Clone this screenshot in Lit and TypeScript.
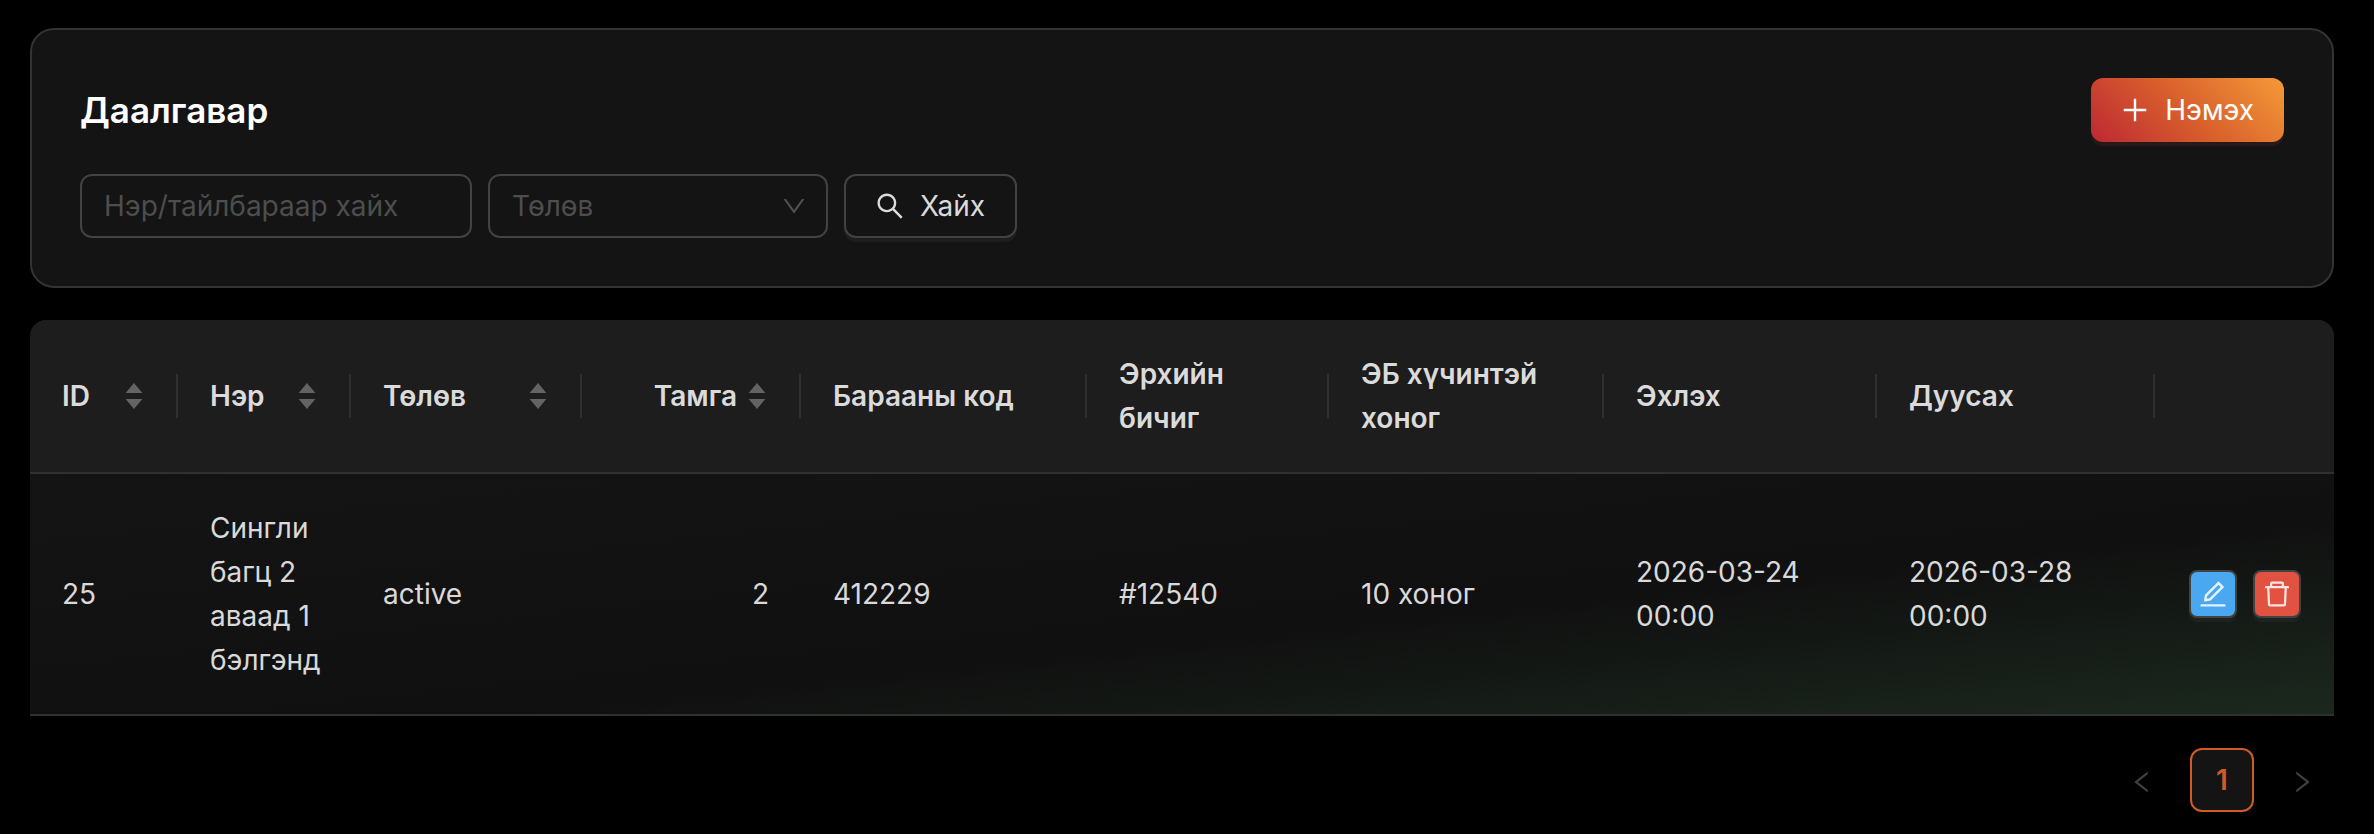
import { LitElement, html, css, svg } from "lit";
import { customElement, state } from "lit/decorators.js";

const ICONS: Record<string, string[]> = {
  plus: [
    "M482 152h60q8 0 8 8v704q0 8-8 8h-60q-8 0-8-8V160q0-8 8-8z",
    "M160 474h704q8 0 8 8v60q0 8-8 8H160q-8 0-8-8v-60q0-8 8-8z",
  ],
  search: [
    "M909.6 854.5L649.9 594.8C690.2 542.7 712 479 712 412c0-80.2-31.3-155.4-87.9-212.1-56.6-56.7-132-87.9-212.1-87.9s-155.5 31.3-212.1 87.9C143.2 256.5 112 331.8 112 412c0 80.1 31.3 155.5 87.9 212.1C256.5 680.8 331.8 712 412 712c67 0 130.6-21.8 182.7-62l259.7 259.6a8.2 8.2 0 0011.6 0l43.6-43.5a8.2 8.2 0 000-11.6zM570.4 570.4C528 612.7 471.8 636 412 636s-116-23.3-158.4-65.6C211.3 528 188 471.8 188 412s23.3-116.1 65.6-158.4C296 211.3 352.2 188 412 188s116.1 23.2 158.4 65.6S636 352.2 636 412s-23.3 116.1-65.6 158.4z",
  ],
  down: [
    "M884 256h-75c-5.1 0-9.9 2.5-12.9 6.6L512 654.2 227.9 262.6c-3-4.1-7.8-6.6-12.9-6.6h-75c-6.5 0-10.3 7.4-6.5 12.7l352.6 486.1c12.8 17.6 39 17.6 51.7 0l352.6-486.1c3.9-5.3.1-12.7-6.4-12.7z",
  ],
  left: [
    "M724 218.3V141c0-6.7-7.7-10.4-12.9-6.3L260.3 486.8a31.86 31.86 0 000 50.3l450.8 352.1c5.3 4.1 12.9.4 12.9-6.3v-77.3c0-4.9-2.3-9.6-6.1-12.6l-360-281 360-281.1c3.8-3 6.1-7.7 6.1-12.6z",
  ],
  right: [
    "M765.7 486.8L314.9 134.7A7.97 7.97 0 00302 141v77.3c0 4.9 2.3 9.6 6.1 12.6l360 281.1-360 281.1c-3.9 3-6.1 7.7-6.1 12.6V883c0 6.7 7.7 10.4 12.9 6.3l450.8-352.1a31.96 31.96 0 000-50.4z",
  ],
  remove: [
    "M360 184h-8c4.4 0 8-3.6 8-8v8h304v-8c0 4.4 3.6 8 8 8h-8v72h72v-80c0-35.3-28.7-64-64-64H352c-35.3 0-64 28.7-64 64v80h72v-72zm504 72H160c-17.7 0-32 14.3-32 32v32c0 4.4 3.6 8 8 8h60.4l24.7 523c1.6 34.1 29.8 61 63.9 61h454c34.2 0 62.3-26.8 63.9-61l24.7-523H888c4.4 0 8-3.6 8-8v-32c0-17.7-14.3-32-32-32zM731.3 840H292.7l-24.2-512h487l-24.2 512z",
  ],
  edit: [
    "M257.7 752c2 0 4-.2 6-.5L431.9 722c2-.4 3.9-1.3 5.3-2.8l423.9-423.9a9.96 9.96 0 000-14.1L694.9 114.9c-1.9-1.9-4.4-2.9-7.1-2.9s-5.2 1-7.1 2.9L256.8 538.8c-1.5 1.5-2.4 3.3-2.8 5.3l-29.5 168.2a33.5 33.5 0 009.4 29.8c6.6 6.4 14.9 9.9 23.8 9.9zm67.4-174.4L687.8 215l73.3 73.3-362.7 362.6-88.9 15.7 15.6-89zM880 836H144c-17.7 0-32 14.3-32 32v36c0 4.4 3.6 8 8 8h784c4.4 0 8-3.6 8-8v-36c0-17.7-14.3-32-32-32z",
  ],
};

const icon = (name: string, cls = "icon") => html`
  <svg class=${cls} viewBox="0 0 1024 1024" fill="currentColor" aria-hidden="true">
    ${ICONS[name].map((d) => svg`<path d=${d}></path>`)}
  </svg>
`;

interface Column {
  title: string;
  width: number;
  sortable?: boolean;
  align?: "end";
}

const COLUMNS: Column[] = [
  { title: "ID", width: 148, sortable: true },
  { title: "Нэр", width: 173, sortable: true },
  { title: "Төлөв", width: 231, sortable: true },
  { title: "Тамга", width: 219, sortable: true, align: "end" },
  { title: "Барааны код", width: 286 },
  { title: "Эрхийн бичиг", width: 242 },
  { title: "ЭБ хүчинтэй хоног", width: 275 },
  { title: "Эхлэх", width: 273 },
  { title: "Дуусах", width: 278 },
  { title: "", width: 179 },
];

const TOTAL = COLUMNS.reduce((sum, c) => sum + c.width, 0);

const ROWS: string[][] = [
  [
    "25",
    "Сингли багц 2 аваад 1 бэлгэнд",
    "active",
    "2",
    "412229",
    "#12540",
    "10 хоног",
    "2026-03-24 00:00",
    "2026-03-28 00:00",
  ],
];

@customElement("app-root")
export class AppRoot extends LitElement {
  @state() private query = "";

  static styles = css`
    :host {
      display: block;
      box-sizing: border-box;
      min-height: 100vh;
      padding: 28px 40px 22px 30px;
      background: #000;
      color: rgba(255, 255, 255, 0.85);
      font-family: Inter, "Noto Sans", sans-serif;
      font-size: 28px;
      line-height: 44px;
    }
    *,
    *::before,
    *::after {
      box-sizing: border-box;
    }
    button,
    input,
    select {
      margin: 0;
      font: inherit;
      color: inherit;
    }
    button {
      cursor: pointer;
    }
    .card {
      display: flex;
      flex-direction: column;
      gap: 32px;
      padding: 48px;
      background: #141414;
      border: 2px solid #333;
      border-radius: 24px;
    }
    .card-head {
      display: flex;
      align-items: center;
      justify-content: space-between;
    }
    .title {
      margin: 0;
      font-size: 35px;
      font-weight: 600;
      color: #fff;
    }
    .filters {
      display: flex;
      gap: 16px;
    }
    .control {
      height: 64px;
      border: 2px solid #424242;
      border-radius: 12px;
      background: #141414;
    }
    .input {
      width: 392px;
      padding: 0 22px;
      outline: none;
    }
    .input::placeholder {
      color: rgba(255, 255, 255, 0.25);
      opacity: 1;
    }
    .select-wrap {
      display: grid;
      align-items: center;
      width: 340px;
      color: rgba(255, 255, 255, 0.25);
    }
    .select-wrap > * {
      grid-area: 1 / 1;
    }
    .select {
      width: 100%;
      padding: 0 22px;
      appearance: none;
      outline: none;
    }
    .chevron {
      justify-self: end;
      width: 28px;
      height: 28px;
      margin-right: 20px;
      pointer-events: none;
    }
    .btn {
      display: inline-flex;
      align-items: center;
      gap: 14px;
      padding: 0 30px 0 28px;
      box-shadow: 0 4px 0 rgba(255, 255, 255, 0.04);
    }
    .btn-primary {
      height: 64px;
      border: 0;
      border-radius: 12px;
      color: #fff;
      background: linear-gradient(45deg, #bd2833, #d9602c 50%, #f39a38);
      box-shadow: 0 4px 0 rgba(220, 80, 40, 0.1);
    }
    .icon {
      width: 32px;
      height: 32px;
      flex: none;
    }
    .table {
      width: 100%;
      margin-top: 32px;
      table-layout: fixed;
      border-collapse: separate;
      border-spacing: 0;
      background: #141414;
      border-radius: 16px 16px 0 0;
      overflow: hidden;
    }
    .th {
      padding: 32px;
      text-align: start;
      font-weight: 600;
      background: #1d1d1d;
      border-bottom: 2px solid #303030;
    }
    .th:not(:last-child) {
      background: linear-gradient(#303030, #303030) right center / 2px 44px no-repeat #1d1d1d;
    }
    .sorter {
      display: flex;
      align-items: center;
      justify-content: space-between;
      gap: 8px;
      width: 100%;
      padding: 0;
      border: 0;
      background: none;
    }
    .sorter.end {
      justify-content: flex-end;
    }
    .carets {
      flex: none;
      width: 24px;
      height: 28px;
      fill: #636363;
    }
    .row {
      background: linear-gradient(to bottom right, #141414, #101010 60%, #1b281e);
    }
    .td {
      padding: 32px;
      border-bottom: 2px solid #303030;
    }
    .td.end {
      text-align: end;
    }
    .actions {
      display: flex;
      justify-content: center;
      gap: 16px;
    }
    .action {
      display: grid;
      place-items: center;
      flex: none;
      width: 48px;
      height: 48px;
      padding: 0;
      border: 2px solid #424242;
      border-radius: 8px;
      box-shadow: 0 4px 0 rgba(255, 255, 255, 0.04);
    }
    .action.edit {
      background: #49a8ef;
    }
    .action.remove {
      background: #e25241;
    }
    .pages {
      display: flex;
      justify-content: flex-end;
      gap: 16px;
      margin: 32px 0 0;
      padding: 0;
      list-style: none;
    }
    .page {
      display: grid;
      place-items: center;
      width: 64px;
      height: 64px;
      padding: 0;
      border: 2px solid transparent;
      border-radius: 12px;
      background: none;
      color: rgba(255, 255, 255, 0.25);
    }
    .page:disabled {
      padding-top: 4px;
    }
    .page.current {
      border-color: #d15b27;
      background: #141414;
      color: #d15b27;
      font-weight: 600;
    }
    .arrow {
      width: 28px;
      height: 28px;
    }
  `;

  private renderHead(col: Column) {
    if (!col.sortable) return col.title;
    return html`
      <button class="sorter ${col.align ?? ""}" type="button">
        <span>${col.title}</span>
        <svg class="carets" viewBox="0 0 24 28" aria-hidden="true">
          <path d="M12 1L20.400 11H3.600z"></path>
          <path d="M12 27L20.400 17H3.600z"></path>
        </svg>
      </button>
    `;
  }

  render() {
    return html`
      <section class="card">
        <div class="card-head">
          <h1 class="title">Даалгавар</h1>
          <button class="btn btn-primary" type="button">${icon("plus")}<span>Нэмэх</span></button>
        </div>
        <form class="filters" @submit=${(e: Event) => e.preventDefault()}>
          <input
            class="control input"
            type="text"
            aria-label="Нэр/тайлбараар хайх"
            placeholder="Нэр/тайлбараар хайх"
            .value=${this.query}
            @input=${(e: Event) => (this.query = (e.target as HTMLInputElement).value)}
          />
          <div class="select-wrap">
            <select class="control select" aria-label="Төлөв">
              <option value="">Төлөв</option>
              <option value="active">active</option>
            </select>
            ${icon("down", "chevron")}
          </div>
          <button class="control btn" type="submit">${icon("search")}<span>Хайх</span></button>
        </form>
      </section>

      <table class="table">
        <colgroup>
          ${COLUMNS.map((c) => html`<col style="width:${(c.width / TOTAL) * 100}%" />`)}
        </colgroup>
        <thead>
          <tr>
            ${COLUMNS.map((c) => html`<th class="th" scope="col">${this.renderHead(c)}</th>`)}
          </tr>
        </thead>
        <tbody>
          ${ROWS.map(
            (row) => html`
              <tr class="row">
                ${row.map((cell, i) => html`<td class="td ${COLUMNS[i].align ?? ""}">${cell}</td>`)}
                <td class="td">
                  <div class="actions">
                    <button class="action edit" type="button" aria-label="Засах">${icon("edit")}</button>
                    <button class="action remove" type="button" aria-label="Устгах">${icon("remove")}</button>
                  </div>
                </td>
              </tr>
            `
          )}
        </tbody>
      </table>

      <nav>
        <ul class="pages">
          <li><button class="page" type="button" disabled aria-label="Өмнөх">${icon("left", "arrow")}</button></li>
          <li><button class="page current" type="button" aria-current="page">1</button></li>
          <li><button class="page" type="button" disabled aria-label="Дараах">${icon("right", "arrow")}</button></li>
        </ul>
      </nav>
    `;
  }
}
